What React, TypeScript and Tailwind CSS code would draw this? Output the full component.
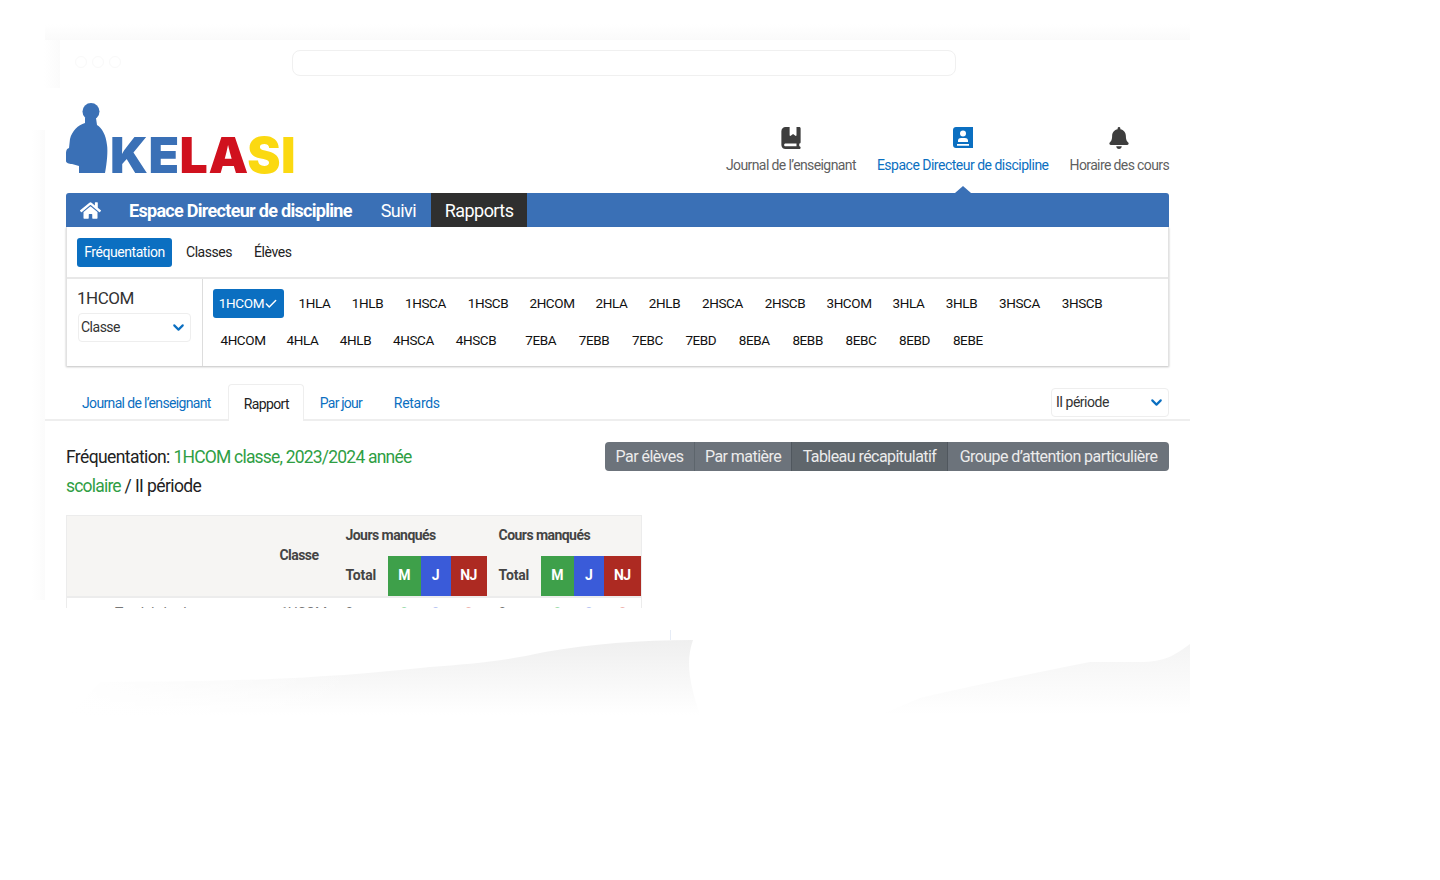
import { ChevronDown, Check } from "lucide-react";
import { FaHome, FaBell } from "react-icons/fa";
import { FaBookBookmark } from "react-icons/fa6";

const rowOne = ["1HLA", "1HLB", "1HSCA", "1HSCB", "2HCOM", "2HLA", "2HLB", "2HSCA", "2HSCB", "3HCOM", "3HLA", "3HLB", "3HSCA", "3HSCB"];
const rowTwo = ["4HCOM", "4HLA", "4HLB", "4HSCA", "4HSCB"];
const rowThree = ["7EBA", "7EBB", "7EBC", "7EBD", "8EBA", "8EBB", "8EBC", "8EBD", "8EBE"];

function Backdrop() {
  return (
    <svg className="absolute inset-0" width="1440" height="880" viewBox="0 0 1440 880">
      <defs>
        <linearGradient id="fadeDown" x1="0" y1="0" x2="0" y2="1">
          <stop offset="0" stopColor="#efefef" />
          <stop offset="1" stopColor="#ffffff" />
        </linearGradient>
        <linearGradient id="fadeDownRight" x1="0" y1="0" x2="0" y2="1">
          <stop offset="0" stopColor="#f4f4f4" />
          <stop offset="1" stopColor="#ffffff" />
        </linearGradient>
        <linearGradient id="fadeRight" x1="0" y1="0" x2="1" y2="0">
          <stop offset="0" stopColor="#ffffff" />
          <stop offset="1" stopColor="#fbfbfb" />
        </linearGradient>
        <linearGradient id="fadeTop" x1="0" y1="0" x2="0" y2="1">
          <stop offset="0" stopColor="#ffffff" />
          <stop offset="1" stopColor="#fafafa" />
        </linearGradient>
        <linearGradient id="whiteLeft" x1="0" y1="0" x2="1" y2="0">
          <stop offset="0" stopColor="#ffffff" />
          <stop offset="1" stopColor="#ffffff" stopOpacity="0" />
        </linearGradient>
      </defs>
      <rect x="45" y="24" width="1145" height="16" fill="url(#fadeTop)" />
      <rect x="44" y="40" width="16" height="48" fill="url(#fadeRight)" />
      <rect x="32" y="130" width="13" height="470" fill="url(#fadeRight)" />
      <path d="M693 640 C640 640 590 644 545 652 C500 662 470 664 430 667 C330 678 240 682 100 682 L70 715 L700 715 C692 690 684 665 693 640 Z" fill="url(#fadeDown)" />
      <rect x="60" y="640" width="300" height="80" fill="url(#whiteLeft)" />
      <path d="M1190 644 C1175 655 1165 662 1140 662 L1090 662 C1040 672 990 682 920 698 L880 715 L1190 715 Z" fill="url(#fadeDownRight)" />
      <line x1="670.5" y1="630" x2="670.5" y2="640" stroke="#e6ecf6" />
    </svg>
  );
}

function Logo() {
  return (
    <div className="flex items-start pt-[15px]">
      <svg width="42" height="72" viewBox="0 0 42 72" fill="#3a70b6">
        <circle cx="25" cy="8.5" r="8.5" />
        <path d="M19 15 L19 20 C12 22 6 28 4 36 L3 45 C0 46 0 49 0 52 L0 58 C0 60 3 61 6 61 L13 63 L13 70 L39 70 C41 60 42 48 41 42 C40 32 36 25 31 22 L30 15 Z" />
      </svg>
      <div className="ml-[2px] mt-[27px] font-['Inter',sans-serif] font-black text-[50px] leading-[50px] tracking-[0.5px]">
        <span className="text-[#3a70b6]">KE</span>
        <span className="text-[#d0111e]">LA</span>
        <span className="text-[#fbd911]">SI</span>
      </div>
    </div>
  );
}

function DirectorIcon() {
  return (
    <svg width="20" height="22" viewBox="0 0 20 22" fill="#0b6fc1">
      <path fillRule="evenodd" d="M3 0 H20 V21 H3 C1.3 21 0 19.7 0 18 V3 C0 1.3 1.3 0 3 0 Z M10 3.5 A3 3 0 1 0 10 9.5 A3 3 0 0 0 10 3.5 Z M5 15 H15 V13.5 C15 11.8 13.5 11 12 11 H8 C6.5 11 5 11.8 5 13.5 Z M4 17 V18.7 H16 V17 Z" />
    </svg>
  );
}

function classWidth(label: string) {
  if (label.includes("COM")) return "w-[60px]";
  if (label.includes("SCA")) return "w-[57px]";
  if (label.includes("SCB")) return "w-[56px]";
  if (label.includes("EB")) return "w-[47.4px]";
  return "w-[47px]";
}

function ClassButton({ label, extra }: { label: string; extra?: string }) {
  return (
    <button className={classWidth(label) + " h-[28px] shrink-0 text-center text-[13.5px] tracking-[-0.4px] text-[#111] " + (extra ?? "")}>
      {label}
    </button>
  );
}

function Select({ label, box }: { label: string; box: string }) {
  return (
    <div className={box + " h-[29px] flex items-center justify-between border border-[#eeeeee] rounded-[4px] pr-[3px] text-[14px] tracking-[-0.5px] text-[#333] bg-white"}>
      <span>{label}</span>
      <ChevronDown size={17} strokeWidth={3} className="text-[#0b6fc1]" />
    </div>
  );
}

function HeadColour({ label, bg }: { label: string; bg: string }) {
  return <th className={bg + " text-white text-[14px] font-bold text-center"}>{label}</th>;
}

export default function App() {
  return (
    <div className="relative w-full h-[880px] overflow-hidden bg-white font-['Roboto',sans-serif] tracking-[-0.55px]">
      <Backdrop />
      <div className="relative pt-[40px] pl-[45px]">
        <div className="ml-[15px] w-[1130px] h-[48px] bg-white rounded-t-[16px] pt-[10px] pl-[15px] flex">
          <div className="flex gap-[5px] pt-[6px]">
            <span className="w-[12px] h-[12px] rounded-full border border-[#f9f9f9]" />
            <span className="w-[12px] h-[12px] rounded-full border border-[#f9f9f9]" />
            <span className="w-[12px] h-[12px] rounded-full border border-[#f9f9f9]" />
          </div>
          <div className="ml-[171px] w-[664px] h-[26px] border border-[#f0f0f0] rounded-[8px]" />
        </div>

        <div className="w-[1145px] h-[520px] overflow-hidden bg-white px-[21px]">
          <header className="h-[105px] flex justify-between">
            <Logo />
            <nav className="flex gap-[21px] pt-[39px] text-[14px] text-[#5f5f5f]">
              <div className="flex flex-col items-center gap-[6px] tracking-[-0.6px]">
                <FaBookBookmark size={22} className="text-[#3d3d3d]" />
                <span>Journal de l’enseignant</span>
              </div>
              <div className="relative flex flex-col items-center gap-[6px] text-[#0b6fc1] tracking-[-0.5px]">
                <DirectorIcon />
                <span>Espace Directeur de discipline</span>
                <span className="absolute left-1/2 -translate-x-1/2 top-[59px] w-0 h-0 border-x-[8px] border-x-transparent border-b-[7px] border-b-[#3a70b6]" />
              </div>
              <div className="flex flex-col items-center gap-[6px] tracking-[-0.62px]">
                <FaBell size={22} className="text-[#3d3d3d]" />
                <span>Horaire des cours</span>
              </div>
            </nav>
          </header>

          <div className="h-[34px] flex items-center bg-[#3a70b6] rounded-t-[3px] text-white text-[18px]">
            <FaHome size={21} className="ml-[14px]" />
            <span className="ml-[28px] font-bold tracking-[-0.7px]">Espace Directeur de discipline</span>
            <span className="ml-[29px]">Suivi</span>
            <span className="ml-[15px] w-[96px] h-full flex items-center justify-center bg-[#2f2f2f] tracking-[-0.55px]">Rapports</span>
          </div>

          <div className="border-x border-[#e2e2e2] shadow-[0_1px_2px_rgba(0,0,0,0.25)]">
            <div className="h-[52px] flex items-center pl-[10px] text-[14px] tracking-[-0.45px] text-[#222] border-b-2 border-[#e8e8e8]">
              <button className="h-[29px] w-[95px] bg-[#0b6fc1] text-white rounded-[3px]">Fréquentation</button>
              <span className="ml-[14px]">Classes</span>
              <span className="ml-[22px]">Élèves</span>
            </div>
            <div className="h-[87px] flex">
              <div className="w-[136px] shrink-0 border-r border-[#dddddd] pl-[10px] pt-[7px]">
                <div className="text-[17px] leading-[24px] tracking-[-0.5px] text-[#333]">1HCOM</div>
                <div className="mt-[3px] ml-[1px]">
                  <Select label="Classe" box="w-[113px] pl-[2px]" />
                </div>
              </div>
              <div className="pl-[10px] pt-[10px] flex flex-col gap-[8px]">
                <div className="flex gap-[6px]">
                  <button className="h-[29px] w-[71px] bg-[#0b6fc1] text-white rounded-[3px] text-[13.5px] tracking-[-0.35px] flex items-center justify-center">
                    1HCOM
                    <Check size={14} strokeWidth={2.5} />
                  </button>
                  {rowOne.map((c, i) => (
                    <ClassButton key={c} label={c} extra={i === 0 ? "ml-[1px]" : ""} />
                  ))}
                </div>
                <div className="flex gap-[6px]">
                  {rowTwo.map((c) => (
                    <ClassButton key={c} label={c} />
                  ))}
                  {rowThree.map((c, i) => (
                    <ClassButton key={c} label={c} extra={i === 0 ? "ml-[7px]" : ""} />
                  ))}
                </div>
              </div>
            </div>
          </div>

          <div className="-mx-[21px] mt-[18px] h-[37px] px-[21px] border-b-2 border-[#eeeeee] flex items-start justify-between text-[14px]">
            <div className="flex pl-[1px] text-[#0b6fc1] h-[37px] tracking-[-0.65px]">
              <span className="pl-[15px] pr-[17px] h-[37px] leading-[38px]">Journal de l’enseignant</span>
              <span className="pl-[15px] pr-[14px] h-[37px] leading-[38px] bg-white border border-b-0 border-[#eeeeee] rounded-t-[4px] text-[#222]">Rapport</span>
              <span className="px-[16px] h-[37px] leading-[38px] tracking-[-0.8px]">Par jour</span>
              <span className="pl-[16px] pr-[15px] h-[37px] leading-[38px] tracking-[-0.3px]">Retards</span>
            </div>
            <div className="mt-[4px]">
              <Select label="II période" box="w-[118px] pl-[4px]" />
            </div>
          </div>

          <div className="mt-[21px] flex justify-between items-start">
            <h2 className="w-[380px] pt-[1px] text-[17.5px] leading-[29px] tracking-[-0.6px] text-[#222]">
              Fréquentation: <span className="text-[#2f9e44] tracking-[-0.8px]">1HCOM classe, 2023/2024 année scolaire</span> / II période
            </h2>
            <div className="flex h-[29px] rounded-[4px] overflow-hidden text-[16px] text-[#ececec] bg-[#6c737b]">
              <span className="w-[89px] flex items-center justify-center">Par élèves</span>
              <span className="w-[97px] flex items-center justify-center border-l border-[#5d656c]">Par matière</span>
              <span className="w-[157px] flex items-center justify-center border-x border-[#50575e] bg-[#5f666c]">Tableau récapitulatif</span>
              <span className="w-[221px] flex items-center justify-center">Groupe d’attention particulière</span>
            </div>
          </div>

          <table className="mt-[14px] w-[575px] table-fixed border-collapse text-[14px] text-[#444]">
            <colgroup>
              <col className="w-[200px]" />
              <col className="w-[67px]" />
              <col className="w-[54px]" />
              <col className="w-[33px]" />
              <col className="w-[30px]" />
              <col className="w-[36px]" />
              <col className="w-[54px]" />
              <col className="w-[33px]" />
              <col className="w-[30px]" />
              <col className="w-[38px]" />
            </colgroup>
            <thead className="bg-[#f6f5f3] font-bold">
              <tr className="h-[40px] border-t border-x border-[#ececec]">
                <th rowSpan={2} />
                <th rowSpan={2} className="text-left pl-[13px]">Classe</th>
                <th colSpan={4} className="text-left pl-[12px]">Jours manqués</th>
                <th colSpan={4} className="text-left pl-[12px]">Cours manqués</th>
              </tr>
              <tr className="h-[41px] border-x border-b-2 border-[#ececec]">
                <th className="text-left pl-[12px] tracking-[-0.15px]">Total</th>
                <HeadColour label="M" bg="bg-[#3ea04a]" />
                <HeadColour label="J" bg="bg-[#3a5bd9]" />
                <HeadColour label="NJ" bg="bg-[#ad2a22]" />
                <th className="text-left pl-[12px] tracking-[-0.15px]">Total</th>
                <HeadColour label="M" bg="bg-[#3ea04a]" />
                <HeadColour label="J" bg="bg-[#3a5bd9]" />
                <HeadColour label="NJ" bg="bg-[#ad2a22]" />
              </tr>
            </thead>
            <tbody>
              <tr className="h-[30px] border-x border-[#ececec] align-top">
                <td className="pt-[5px] pl-[48px] text-[#777]">Total de la classe</td>
                <td className="pt-[5px] pl-[14px] text-[#777]">1HCOM</td>
                <td className="pt-[5px] pl-[12px] text-[#777]">0</td>
                <td className="pt-[5px] text-center text-[#9fdcae]">0</td>
                <td className="pt-[5px] text-center text-[#b9c5f2]">0</td>
                <td className="pt-[5px] text-center text-[#efb5b0]">0</td>
                <td className="pt-[5px] pl-[12px] text-[#777]">0</td>
                <td className="pt-[5px] text-center text-[#9fdcae]">0</td>
                <td className="pt-[5px] text-center text-[#b9c5f2]">0</td>
                <td className="pt-[5px] text-center text-[#efb5b0]">0</td>
              </tr>
            </tbody>
          </table>
        </div>
      </div>
    </div>
  );
}
